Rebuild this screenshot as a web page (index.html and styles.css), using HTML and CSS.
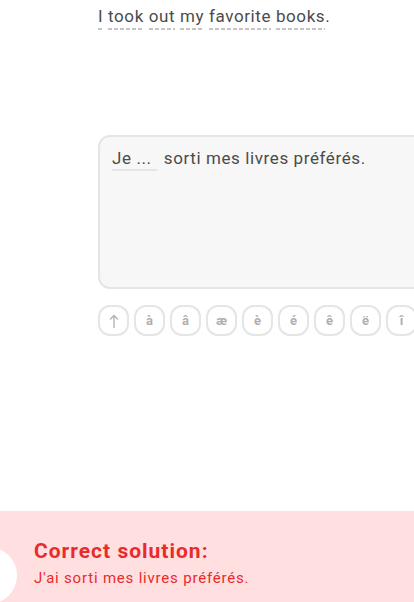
FILE: index.html
```html
<!DOCTYPE html>
<html>
<head>
<meta charset="utf-8">
<link rel="stylesheet" href="styles.css">
</head>
<body>
<div class="page">
  <main class="main">
    <div class="prompt">
      <span class="word">I</span> <span class="word">took</span> <span class="word">out</span> <span class="word">my</span> <span class="word">favorite</span> <span class="word">books</span>.
    </div>
    <div class="answer">
      <span class="blank">Je ...</span> sorti mes livres préférés.
    </div>
    <div class="keys">
      <span class="key"><svg width="10" height="14" viewBox="0 0 10 14"><path d="M5 13.5V1.5M1.5 5L5 1.5L8.5 5" fill="none" stroke="#afafaf" stroke-width="1.3" stroke-linecap="round" stroke-linejoin="round"/></svg></span>
      <span class="key">à</span>
      <span class="key">â</span>
      <span class="key">æ</span>
      <span class="key">è</span>
      <span class="key">é</span>
      <span class="key">ê</span>
      <span class="key">ë</span>
      <span class="key">î</span>
    </div>
  </main>
  <footer class="footer">
    <span class="dot"></span>
    <div class="sol-title">Correct solution:</div>
    <div class="sol-text">J'ai sorti mes livres préférés.</div>
  </footer>
</div>
</body>
</html>
```
FILE: styles.css
```css
html, body {
  margin: 0;
  padding: 0;
  overflow: hidden;
  background: #fff;
}
body {
  font-family: Roboto, "Noto Sans", sans-serif;
  color: #4b4b4b;
}
.page {
  width: 414px;
  height: 602px;
  display: flex;
  flex-direction: column;
  overflow: hidden;
}
.main {
  padding-left: 98px;
  padding-top: 5px;
  flex: 1;
}
.prompt {
  font-size: 17px;
  letter-spacing: 0.6px;
  line-height: 22px;
  color: #4b4b4b;
  white-space: nowrap;
}
.word {
  padding-bottom: 4px;
  background-image: repeating-linear-gradient(to right, #c4c4c4 0 4px, transparent 4px 6px);
  background-size: 100% 2px;
  background-position: left bottom;
  background-repeat: no-repeat;
}
.answer {
  margin-top: 108px;
  width: 330px;
  height: 154px;
  box-sizing: border-box;
  background: #f7f7f7;
  border: 2px solid #e5e5e5;
  border-radius: 12px;
  padding: 10px 12px;
  font-size: 17px;
  letter-spacing: 0.6px;
  line-height: 22px;
  color: #4b4b4b;
  white-space: nowrap;
}
.blank {
  display: inline-block;
  width: 45px;
  border-bottom: 2px solid #e5e5e5;
  margin-right: 2px;
  line-height: 22px;
}
.keys {
  display: flex;
  gap: 5px;
  margin-top: 16px;
  width: 330px;
}
.key {
  flex: none;
  width: 31px;
  height: 31px;
  box-sizing: border-box;
  border: 2px solid #e5e5e5;
  border-radius: 12px;
  display: flex;
  align-items: center;
  justify-content: center;
  font-size: 13px;
  font-weight: 700;
  color: #afafaf;
}
.footer {
  position: relative;
  height: 91px;
  background: #ffdfe0;
  padding: 27px 0 0 34px;
  box-sizing: border-box;
  overflow: hidden;
}
.dot {
  position: absolute;
  left: -40px;
  top: 36px;
  width: 57px;
  height: 57px;
  border-radius: 50%;
  background: #fff;
}
.sol-title {
  font-size: 21px;
  font-weight: 700;
  letter-spacing: 1px;
  line-height: 26px;
  color: #ea2b2b;
}
.sol-text {
  margin-top: 5px;
  font-size: 15px;
  letter-spacing: 0.8px;
  line-height: 18px;
  color: #ea2b2b;
}
```
